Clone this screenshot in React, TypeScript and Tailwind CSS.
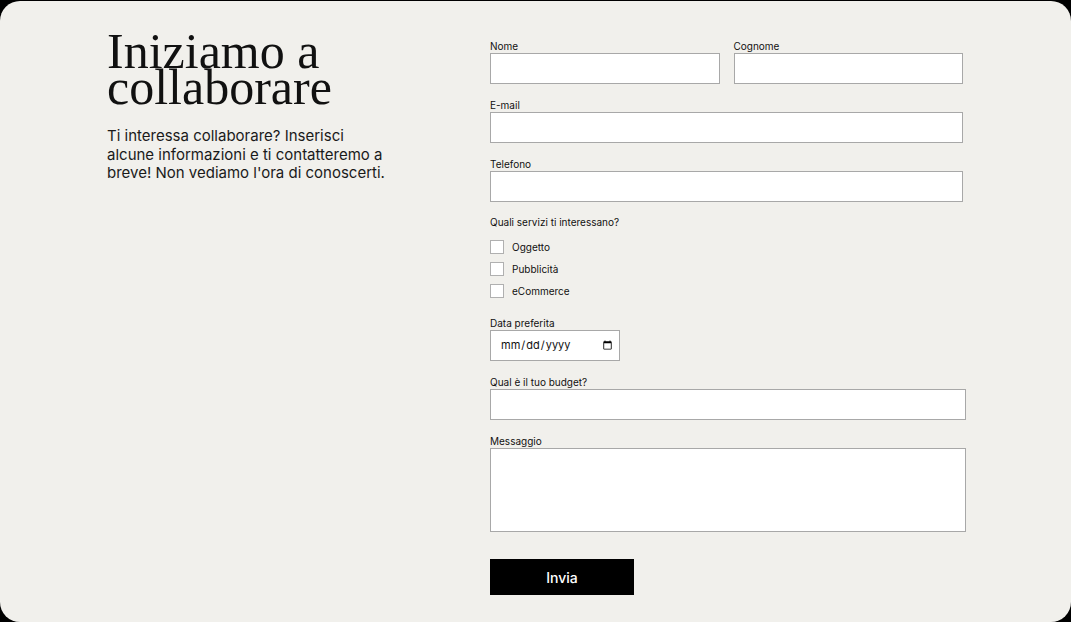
import React from 'react'

const sans = "font-['Inter','Noto_Sans',sans-serif]"

const Field = ({ label, className = '', children }: { label: string; className?: string; children: React.ReactNode }) => (
  <div className={`flex flex-col gap-px ${className}`}>
    <label className="text-[10px] leading-[12px] text-[#111]">{label}</label>
    {children}
  </div>
)

const inputCls = 'h-[31px] w-full border border-[#a8a8a8] bg-white outline-none'

const services = ['Oggetto', 'Pubblicità', 'eCommerce']

export default function App() {
  return (
    <div className="h-[622px] w-[1071px] bg-black pt-px">
      <div className={`flex h-[621px] rounded-[20px] bg-[#f1f0ec] pl-[107px] ${sans}`}>
        {/* Intro */}
        <div className="w-[383px] pt-[32px]">
          <h1 className="font-['Liberation_Serif',serif] text-[50px] leading-[36px] text-[#111]">
            Iniziamo a<br />collaborare
          </h1>
          <p className="mt-[22px] w-[285px] text-[15px] leading-[18.5px] text-[#1a1a1a]">
            Ti interessa collaborare? Inserisci alcune informazioni e ti contatteremo a breve! Non vediamo l'ora di conoscerti.
          </p>
        </div>

        {/* Form */}
        <form className="flex w-[476px] flex-col pt-[39px]" onSubmit={(e) => e.preventDefault()}>
          <div className="flex w-[473px] gap-[14px]">
            <Field label="Nome" className="flex-1">
              <input className={inputCls} />
            </Field>
            <Field label="Cognome" className="flex-1">
              <input className={inputCls} />
            </Field>
          </div>
          <Field label="E-mail" className="mt-[15px] w-[473px]">
            <input className={inputCls} />
          </Field>
          <Field label="Telefono" className="mt-[15px] w-[473px]">
            <input className={inputCls} />
          </Field>

          <p className="mt-[14px] text-[10px] leading-[12px] text-[#111]">Quali servizi ti interessano?</p>
          <div className="mt-[12px] flex flex-col gap-[8px]">
            {services.map((s) => (
              <label key={s} className="flex items-center gap-[8px] text-[10px] leading-[14px] text-[#111]">
                <input type="checkbox" className="h-[14px] w-[14px] appearance-none border border-[#b0b0b0] bg-white" />
                {s}
              </label>
            ))}
          </div>

          <Field label="Data preferita" className="mt-[19px] w-[130px]">
            <input type="date" className="h-[31px] w-[130px] border border-[#a8a8a8] bg-white pl-[9px] pr-[4px] text-[11px] text-[#111] outline-none" />
          </Field>

          <Field label="Qual è il tuo budget?" className="mt-[15px]">
            <input className={inputCls} />
          </Field>
          <Field label="Messaggio" className="mt-[15px]">
            <textarea className="h-[84px] w-full resize-none border border-[#a8a8a8] bg-white outline-none" />
          </Field>

          <button type="submit" className="mt-[27px] h-[36px] w-[144px] bg-black text-[14px] font-medium text-white">
            Invia
          </button>
        </form>
      </div>
    </div>
  )
}
